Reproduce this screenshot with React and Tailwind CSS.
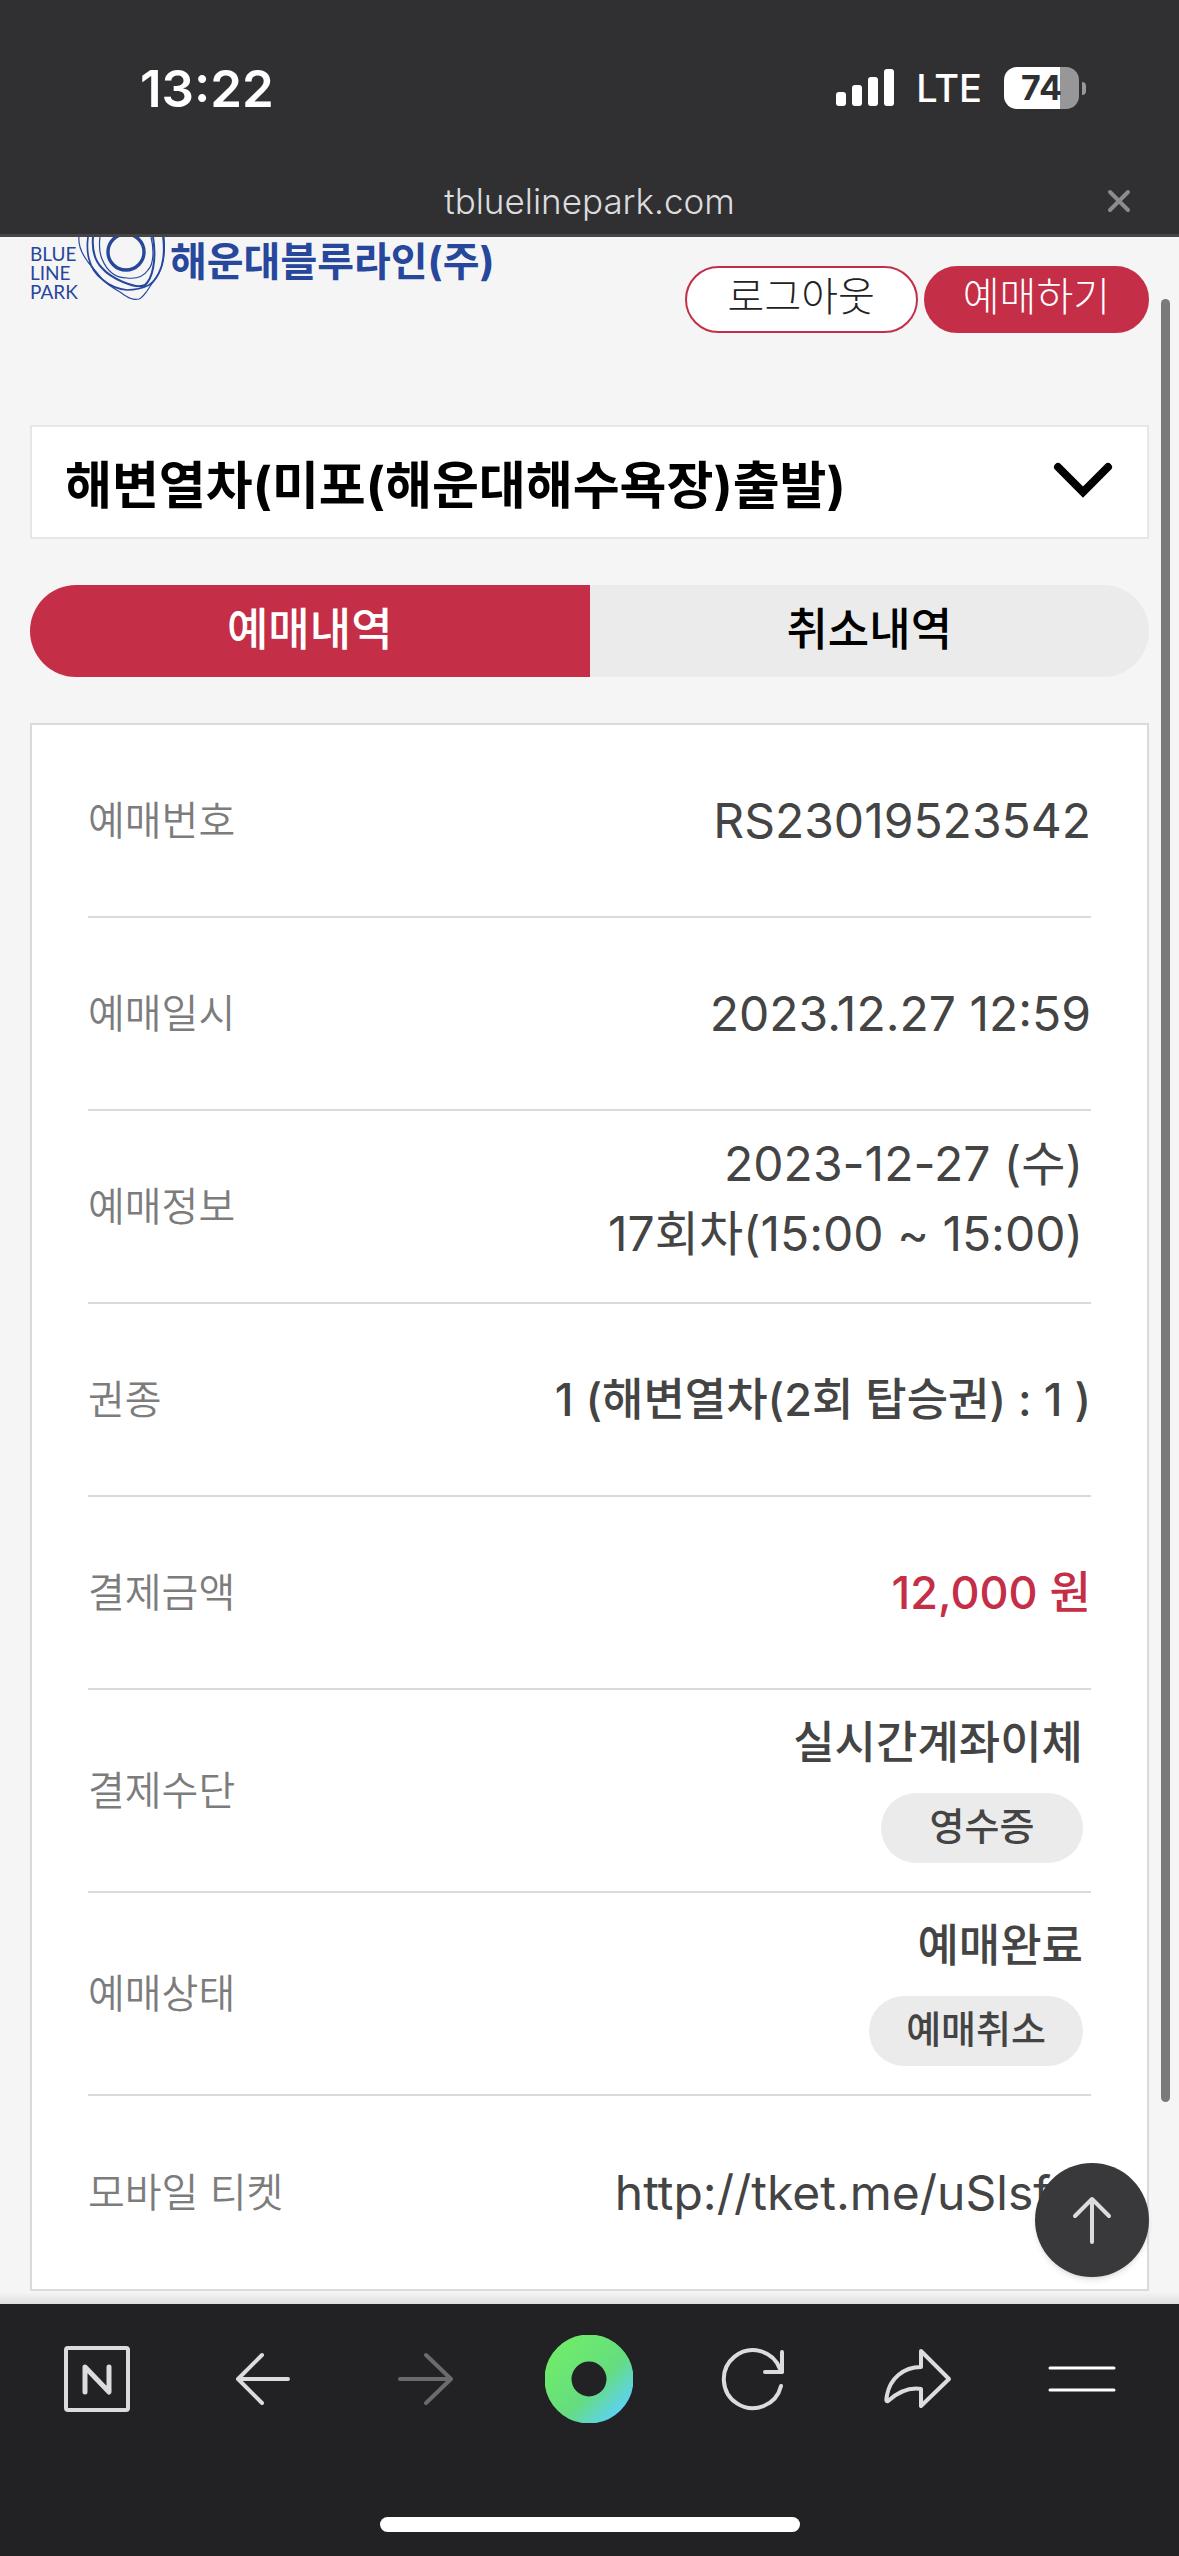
import React from 'react';

const details = [
    { label: '예매번호', value: 'RS23019523542', numeric: true },
    { label: '예매일시', value: '2023.12.27 12:59', numeric: true },
    { label: '예매정보', lines: ['2023-12-27 (수)', '17회차(15:00 ~ 15:00)'], numeric: true },
    { label: '권종', value: '1 (해변열차(2회 탑승권) : 1 )' },
    { label: '결제금액', value: '12,000 원', accent: true },
    { label: '결제수단', lines: ['실시간계좌이체'], action: '영수증' },
    { label: '예매상태', lines: ['예매완료'], action: '예매취소' },
    { label: '모바일 티켓', value: 'http://tket.me/uSlsf', numeric: true, link: true },
];

// Stroke icon shared by the browser toolbar
const LineIcon = ({ className = "", children }) => (
    <svg
        viewBox="0 0 72 72"
        className={`size-[72px] fill-none stroke-[4] ${className}`}
        strokeLinecap="round"
        strokeLinejoin="round"
        aria-hidden="true"
    >
        {children}
    </svg>
);

const StatusBar = () => (
    <div className="flex h-[176px] items-center justify-between pr-[93px] pl-[140px] text-white">
        <time className="text-[51px] leading-none font-semibold">13:22</time>
        <div className="flex items-center gap-[22px]">
            <svg viewBox="0 0 58 38" className="h-[38px] w-[58px] fill-white" aria-hidden="true">
                <rect x="0" y="23" width="10" height="14" rx="3" />
                <rect x="16" y="16" width="10" height="21" rx="3" />
                <rect x="32" y="8" width="10" height="29" rx="3" />
                <rect x="48" y="0" width="10" height="37" rx="3" />
            </svg>
            <span className="text-[38px] leading-none font-medium">LTE</span>
            <div className="flex items-center gap-[3px]">
                <div className="flex h-[42px] w-[75px] items-center justify-center rounded-[13px] bg-linear-to-r from-white from-75% to-[#979799] to-75% text-[34px] leading-none font-bold text-[#303032]">
                    74
                </div>
                <div className="h-[13px] w-[4px] rounded-r-full bg-[#979799]" />
            </div>
        </div>
    </div>
);

const BrowserHeader = () => (
    <header className="shrink-0 border-b-3 border-[#454547] bg-[#303032] font-['Inter','Liberation_Sans',sans-serif]">
        <StatusBar />
        <div className="grid h-[58px] grid-cols-[1fr_auto_1fr] items-center px-[48px] pb-2">
            <span className="col-start-2 text-[35px] leading-none font-light text-[#dcdcde]">tbluelinepark.com</span>
            <button type="button" aria-label="닫기" className="justify-self-end">
                <svg viewBox="0 0 24 24" className="size-6 fill-none stroke-[#8c8c8e] stroke-4" strokeLinecap="round">
                    <path d="M3 3l18 18M21 3L3 21" />
                </svg>
            </button>
        </div>
    </header>
);

const Logo = () => (
    <a href="#home" className="flex items-start text-[#26479c]">
        <span className="mt-[7px] w-[48px] font-['Lato','Liberation_Sans',sans-serif] text-[19px] leading-[19px]">
            BLUE
            <br />
            LINE
            <br />
            PARK
        </span>
        <svg
            viewBox="0 0 88 64"
            className="h-[64px] w-[88px] fill-none stroke-[#26479c]"
            strokeLinejoin="round"
            aria-hidden="true"
        >
            <circle cx="48" cy="15" r="18" strokeWidth="3.4" />
            <path d="M22 0C21 8 21 15 24 22C29 34 38 41 49 41C58 42 66 39 70 33C76 27 76 12 73 0" strokeWidth="1.2" />
            <path d="M15 0C14 12 17 24 24 31C30 38 38 42 45 45C52 48 61 51 67 48C74 42 79 24 75 0" strokeWidth="2" />
            <path d="M10 0C9 8 9 15 11 22C13 30 18 38 25 43C32 49 40 52 49 53C57 53 65 51 71 48C79 43 84 31 85 22C86 15 86 8 85 0" strokeWidth="1.7" />
            <path d="M1 0C0 9 4 17 10 25L24 42C29 47 35 51 42 55C48 59 54 64 61 62C64 61 66 58 69 54L81 36C86 27 87 12 86 0" strokeWidth="1.2" />
        </svg>
        <span className="ml-1 text-[40px] leading-[50px] font-bold">해운대블루라인(주)</span>
    </a>
);

const SiteHeader = () => (
    <div className="flex h-[188px] items-start justify-between">
        <Logo />
        <nav className="mt-[29px] flex gap-[6px] text-[40px] leading-[58px] font-light">
            <a href="#logout" className="h-[67px] rounded-full border-2 border-[#c42e47] bg-white px-[41px] text-[#222]">
                로그아웃
            </a>
            <a href="#booking" className="h-[67px] rounded-full border-2 border-[#c42e47] bg-[#c42e47] px-[37px] text-white">
                예매하기
            </a>
        </nav>
    </div>
);

const RouteSelect = () => (
    <div className="grid items-center">
        <select
            aria-label="노선"
            className="col-start-1 row-start-1 h-[114px] w-full appearance-none border-2 border-[#e6e6e6] bg-white pt-2 pl-[33px] text-[51px] font-bold text-black"
        >
            <option>해변열차(미포(해운대해수욕장)출발)</option>
        </select>
        <svg
            viewBox="0 0 60 36"
            className="pointer-events-none col-start-1 row-start-1 mr-[36px] mb-1 h-[36px] w-[60px] justify-self-end fill-none stroke-black stroke-[8]"
            strokeLinecap="round"
            aria-hidden="true"
        >
            <path d="M5 5L30 30L55 5" />
        </svg>
    </div>
);

const Tabs = () => (
    <div role="tablist" className="mt-[46px] grid h-[92px] grid-cols-2 overflow-hidden rounded-full text-[45px] leading-none font-medium">
        <button type="button" role="tab" aria-selected="true" className="bg-[#c42e47] pb-1 text-white">
            예매내역
        </button>
        <button type="button" role="tab" aria-selected="false" className="bg-[#ebebeb] pb-1 text-black">
            취소내역
        </button>
    </div>
);

const DetailRow = ({ item }) => (
    <div className="flex min-h-[193px] items-center justify-between border-b-2 border-[#dadada] last:border-b-0">
        <dt className="text-[40px] font-[350] text-[#7c7c7c]">{item.label}</dt>
        {item.lines ? (
            <dd className={`flex flex-col items-end self-start pt-[18px] pr-2 pb-7 ${item.numeric ? 'text-[48px]' : 'font-medium'}`}>
                {item.lines.map((line) => (
                    <p key={line} className="leading-[70px]">{line}</p>
                ))}
                {item.action && (
                    <button
                        type="button"
                        className="mt-[15px] h-[70px] min-w-[202px] rounded-full bg-[#ebebeb] px-[37px] pb-1 text-[38px] leading-none font-medium"
                    >
                        {item.action}
                    </button>
                )}
            </dd>
        ) : (
            <dd className={`${item.accent ? 'text-[#c42e47]' : ''} ${item.numeric ? 'text-[48px]' : 'font-medium'}`}>
                {item.link ? <a href="#ticket" className="pr-[40px]">{item.value}</a> : item.value}
            </dd>
        )}
    </div>
);

const BrowserToolbar = () => (
    <footer className="shrink-0 bg-[#222224] pb-6">
        <div className="grid h-[150px] grid-cols-7 px-[15px] *:grid *:place-content-center">
            <button type="button" aria-label="네이버 홈">
                <LineIcon className="stroke-[#dcdce0]">
                    <rect x="5" y="5" width="62" height="62" rx="2" />
                    <path d="M24 49V24L48 49V24" strokeWidth="5" />
                </LineIcon>
            </button>
            <button type="button" aria-label="뒤로">
                <LineIcon className="stroke-[#dcdce0]">
                    <path d="M37 12L13 36L37 60M13 36H63" />
                </LineIcon>
            </button>
            <button type="button" aria-label="앞으로" disabled>
                <LineIcon className="stroke-[#6b6b6d]">
                    <path d="M37 12L62 36L37 60M62 36H11" />
                </LineIcon>
            </button>
            <button type="button" aria-label="그린닷">
                <svg viewBox="0 0 88 88" className="size-[88px]" aria-hidden="true">
                    <defs>
                        <linearGradient id="dot" x1="0.1" y1="0.1" x2="0.98" y2="0.98">
                            <stop offset="0" stopColor="#6ee96d" />
                            <stop offset="0.58" stopColor="#65dc80" />
                            <stop offset="1" stopColor="#5ed3ea" />
                        </linearGradient>
                    </defs>
                    <circle cx="44" cy="44" r="31" fill="none" stroke="url(#dot)" strokeWidth="27" />
                </svg>
            </button>
            <button type="button" aria-label="새로고침">
                <LineIcon className="stroke-[#dcdce0]">
                    <path d="M63 43A29 29 0 1 1 62 26L64 29M64 9V29H47" />
                </LineIcon>
            </button>
            <button type="button" aria-label="공유">
                <LineIcon className="stroke-[#dcdce0]">
                    <path d="M39 8L67 36L39 63V46C26 44 15 50 6 58C3 59 5 54 5 52C8 36 21 24 39 24Z" />
                </LineIcon>
            </button>
            <button type="button" aria-label="메뉴">
                <LineIcon className="stroke-white">
                    <path d="M4 25H68M4 47H68" strokeWidth="3" />
                </LineIcon>
            </button>
        </div>
        <div className="mx-auto mt-[63px] h-[15px] w-[420px] rounded-full bg-white" />
    </footer>
);

export default function App() {
    return (
        <div className="flex min-h-screen flex-col bg-[#f5f5f5] font-['Inter','Noto_Sans_CJK_KR',sans-serif]">
            <BrowserHeader />
            <main className="relative flex-1 overflow-hidden px-[30px] pb-3">
                <SiteHeader />
                <RouteSelect />
                <Tabs />
                <dl className="mt-[46px] border-2 border-[#dadada] bg-white px-[56px] text-[45px] text-[#444]">
                    {details.map((item) => (
                        <DetailRow key={item.label} item={item} />
                    ))}
                </dl>
                <div className="absolute inset-x-0 bottom-0 h-3 bg-linear-to-b from-[#f5f5f5] to-[#dedede]" />
                {/* Scroll position */}
                <div className="absolute top-[62px] right-[9px] bottom-[202px] w-[9px] rounded-full bg-[#7a7a7a]" />
                <button
                    type="button"
                    aria-label="맨 위로"
                    className="absolute right-[30px] bottom-[27px] grid size-[114px] place-items-center rounded-full bg-[#39393b] shadow-md"
                >
                    <svg viewBox="0 0 48 48" className="size-12 fill-none stroke-[#dcdce0] stroke-4" strokeLinecap="round" strokeLinejoin="round">
                        <path d="M24 46V3M7 20L24 3L41 20" />
                    </svg>
                </button>
            </main>
            <BrowserToolbar />
        </div>
    );
}
